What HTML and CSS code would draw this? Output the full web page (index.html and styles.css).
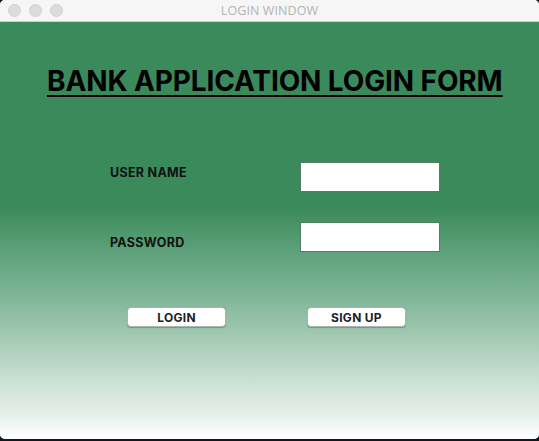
FILE: index.html
```html
<!DOCTYPE html>
<html>
<head>
<meta charset="utf-8">
<link rel="stylesheet" href="styles.css">
</head>
<body>
<div class="window">
  <div class="titlebar">
    <div class="lights">
      <span class="light"></span><span class="light"></span><span class="light"></span>
    </div>
    <div class="wintitle">LOGIN WINDOW</div>
  </div>
  <div class="content">
    <h1 class="heading">BANK APPLICATION LOGIN FORM</h1>
    <div class="form">
      <div class="label label-user">USER NAME</div>
      <input class="field" type="text">
      <div class="label label-pass">PASSWORD</div>
      <input class="field" type="password">
    </div>
    <div class="buttons">
      <button class="btn">LOGIN</button>
      <button class="btn">SIGN UP</button>
    </div>
  </div>
</div>
</body>
</html>
```
FILE: styles.css
```css
html, body {
  margin: 0;
  padding: 0;
  background: #14141f;
  width: 539px;
  height: 441px;
  overflow: hidden;
  font-family: Inter, "Liberation Sans", sans-serif;
}
.window {
  width: 539px;
  height: 439px;
  border-radius: 5px;
  overflow: hidden;
  display: flex;
  flex-direction: column;
  background: #fff;
}
.titlebar {
  height: 21px;
  flex: none;
  background: #f6f6f6;
  border-bottom: 1px solid #cfcfcf;
  position: relative;
  display: flex;
  align-items: center;
  justify-content: center;
}
.lights {
  position: absolute;
  left: 8px;
  top: 4px;
  display: flex;
  gap: 8px;
}
.light {
  width: 11px;
  height: 11px;
  border-radius: 50%;
  background: #dcdcdc;
  border: 0.5px solid #d0d0d0;
}
.wintitle {
  font-family: "Open Sans", "Liberation Sans", sans-serif;
  font-size: 12.5px;
  color: #b3b3b3;
  letter-spacing: 0.1px;
}
.content {
  flex: 1;
  background: linear-gradient(to bottom,
    #3b8a5b 0px,
    #3b8a5b 185px,
    #5a9f77 225px,
    #80b698 275px,
    #a8ccb7 320px,
    #cbe1d4 360px,
    #e8f1ec 395px,
    #ffffff 417px);
  display: flex;
  flex-direction: column;
}
.heading {
  margin: 42px 0 0 47px;
  font-size: 28px;
  font-weight: 700;
  letter-spacing: -0.12px;
  color: #000;
  text-decoration: underline;
  text-decoration-thickness: 2px;
  text-underline-offset: 4px;
  line-height: 34px;
  width: fit-content;
}
.form {
  margin: 64px 0 0 110px;
  display: grid;
  grid-template-columns: 190px 140px;
  grid-auto-rows: 30px;
  row-gap: 30px;
}
.label {
  font-size: 12.5px;
  font-weight: 700;
  color: #111;
  line-height: 15px;
  letter-spacing: 0.3px;
}
.label-user { padding-top: 3px; }
.label-pass { padding-top: 13px; }
.field {
  box-sizing: border-box;
  width: 140px;
  height: 30px;
  margin: 0;
  background: #fff;
  border: 1px solid #4f7f62;
  padding: 0 4px;
  outline: none;
}
.buttons {
  margin: 55px 0 0 127px;
  display: flex;
  gap: 81px;
}
.btn {
  box-sizing: border-box;
  width: 99px;
  height: 20px;
  margin: 0;
  padding: 0;
  background: #fff;
  border: 0.5px solid #a9b8ae;
  border-radius: 4px;
  box-shadow: 0 0.5px 1px rgba(0,0,0,0.25);
  font-family: Inter, "Liberation Sans", sans-serif;
  font-size: 12px;
  font-weight: 700;
  color: #222;
  letter-spacing: 0.3px;
}
```
